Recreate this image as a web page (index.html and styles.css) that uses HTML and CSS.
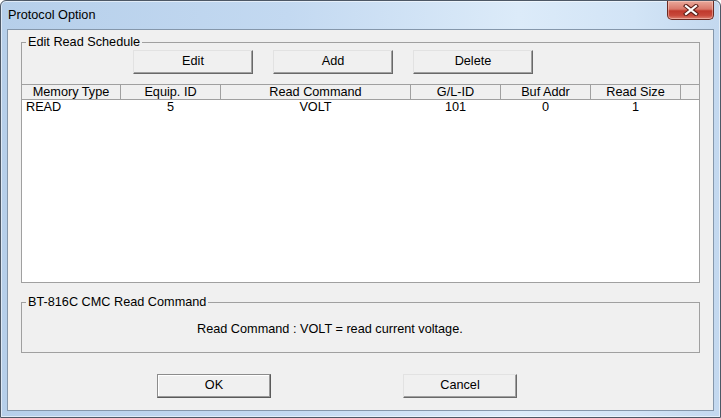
FILE: index.html
```html
<!DOCTYPE html>
<html lang="en">
<head>
    <meta charset="UTF-8">
    <title>Protocol Option</title>
    <link rel="stylesheet" href="styles.css">
</head>
<body>

<div class="window">
    <div class="titlebar">
        <span class="title">Protocol Option</span>
        <div class="close">
            <svg width="16" height="12" viewBox="0 0 16 12">
                <path d="M3 2 L13 10 M13 2 L3 10" stroke="#5a1e17" stroke-width="4.2" stroke-linecap="square"/>
                <path d="M3 2 L13 10 M13 2 L3 10" stroke="#ffffff" stroke-width="2.2" stroke-linecap="square"/>
            </svg>
        </div>
    </div>

    <div class="client">
        <fieldset class="group schedule">
            <legend>Edit Read Schedule</legend>
            <div class="toolbar">
                <button class="btn">Edit</button>
                <button class="btn">Add</button>
                <button class="btn">Delete</button>
            </div>
            <div class="list">
                <div class="row head">
                    <span class="cell c1">Memory Type</span>
                    <span class="cell c2">Equip. ID</span>
                    <span class="cell c3">Read Command</span>
                    <span class="cell c4">G/L-ID</span>
                    <span class="cell c5">Buf Addr</span>
                    <span class="cell c6">Read Size</span>
                </div>
                <div class="row">
                    <span class="cell c1 left">READ</span>
                    <span class="cell c2">5</span>
                    <span class="cell c3">VOLT</span>
                    <span class="cell c4">101</span>
                    <span class="cell c5">0</span>
                    <span class="cell c6">1</span>
                </div>
            </div>
        </fieldset>

        <fieldset class="group info">
            <legend>BT-816C CMC Read Command</legend>
            <p class="desc">Read Command : VOLT = read current voltage.</p>
        </fieldset>

        <div class="actions">
            <button class="btn wide default">OK</button>
            <button class="btn wide">Cancel</button>
        </div>
    </div>
</div>

</body>
</html>
```

FILE: styles.css
```css
* {
    box-sizing: border-box;
}

body {
    margin: 0;
    background: #ffffff;
    font-family: "Liberation Sans", Arial, sans-serif;
    font-size: 12.7px;
    color: #000;
}

.window {
    width: 721px;
    height: 418px;
    border: 1px solid #4d5866;
    border-radius: 6px 6px 0 0;
    background: linear-gradient(to right, #b6cfea 0%, #c3d9f1 40%, #dcebf9 72%, #d2e4f6 88%, #c3d8ef 100%);
    box-shadow: inset 0 0 0 1px rgba(255, 255, 255, 0.55);
    display: flex;
    flex-direction: column;
}

.titlebar {
    height: 28px;
    display: flex;
    justify-content: space-between;
    align-items: flex-start;
    flex-shrink: 0;
}

.title {
    padding: 7px 0 0 7px;
    line-height: 14px;
    color: #000;
}

.close {
    width: 47px;
    height: 19px;
    margin-right: 6px;
    border: 1px solid #6b2a22;
    border-top: none;
    border-radius: 0 0 5px 5px;
    background: linear-gradient(to bottom, #e9a99b 0%, #d9786a 45%, #c0392c 55%, #c8493b 80%, #de8272 100%);
    box-shadow: inset 0 0 0 1px rgba(255, 220, 210, 0.45);
    display: flex;
    justify-content: center;
    align-items: center;
}

.close svg {
    display: block;
}

.client {
    flex: 1;
    margin: 0 6px 6px;
    border: 1px solid #8597ab;
    background: #f0f0f0;
    padding: 0 13px;
}

.group {
    margin: 0;
    padding: 0;
    min-width: 0;
    border: 1px solid #a0a0a0;
}

.group legend {
    margin-left: 4px;
    padding: 0 2px;
    line-height: 14px;
}

.schedule {
    margin-top: 5px;
}

.toolbar {
    display: flex;
    gap: 20px;
    padding: 1px 0 0 111px;
}

.btn {
    font-family: inherit;
    font-size: 12.7px;
    color: #000;
    width: 120px;
    height: 24px;
    padding: 0 0 2px;
    background: #f0f0f0;
    border: 1px solid;
    border-color: #e2e2e2 #696969 #696969 #e2e2e2;
    box-shadow: inset -1px -1px 0 #a0a0a0;
    border-radius: 0;
}

.btn.wide {
    width: 114px;
}

.btn.default {
    border-color: #8c8c8c #5a5a5a #5a5a5a #8c8c8c;
    box-shadow: inset -1px -1px 0 #9a9a9a, inset 1px 1px 0 #ffffff;
}

.list {
    margin-top: 10px;
    height: 198px;
    border-top: 1px solid #a0a0a0;
    background: #ffffff;
}

.row {
    display: flex;
    height: 14px;
    line-height: 14px;
}

.row.head {
    height: 15px;
    background: #f0f0f0;
    border-bottom: 1px solid #a0a0a0;
}

.cell {
    text-align: center;
    white-space: nowrap;
    border-right: 1px solid transparent;
}

.head .cell {
    border-right-color: #a0a0a0;
}

.cell.left {
    text-align: left;
    padding-left: 4px;
}

.c1 { width: 99px; }
.c2 { width: 100px; }
.c3 { width: 190px; }
.c4 { width: 90px; }
.c5 { width: 90px; }
.c6 { width: 90px; }

.info {
    margin-top: 12px;
}

.desc {
    margin: 0;
    padding: 13px 0 16px 175px;
    line-height: 14px;
}

.actions {
    display: flex;
    gap: 132px;
    margin-top: 21px;
    padding-left: 136px;
}
```
